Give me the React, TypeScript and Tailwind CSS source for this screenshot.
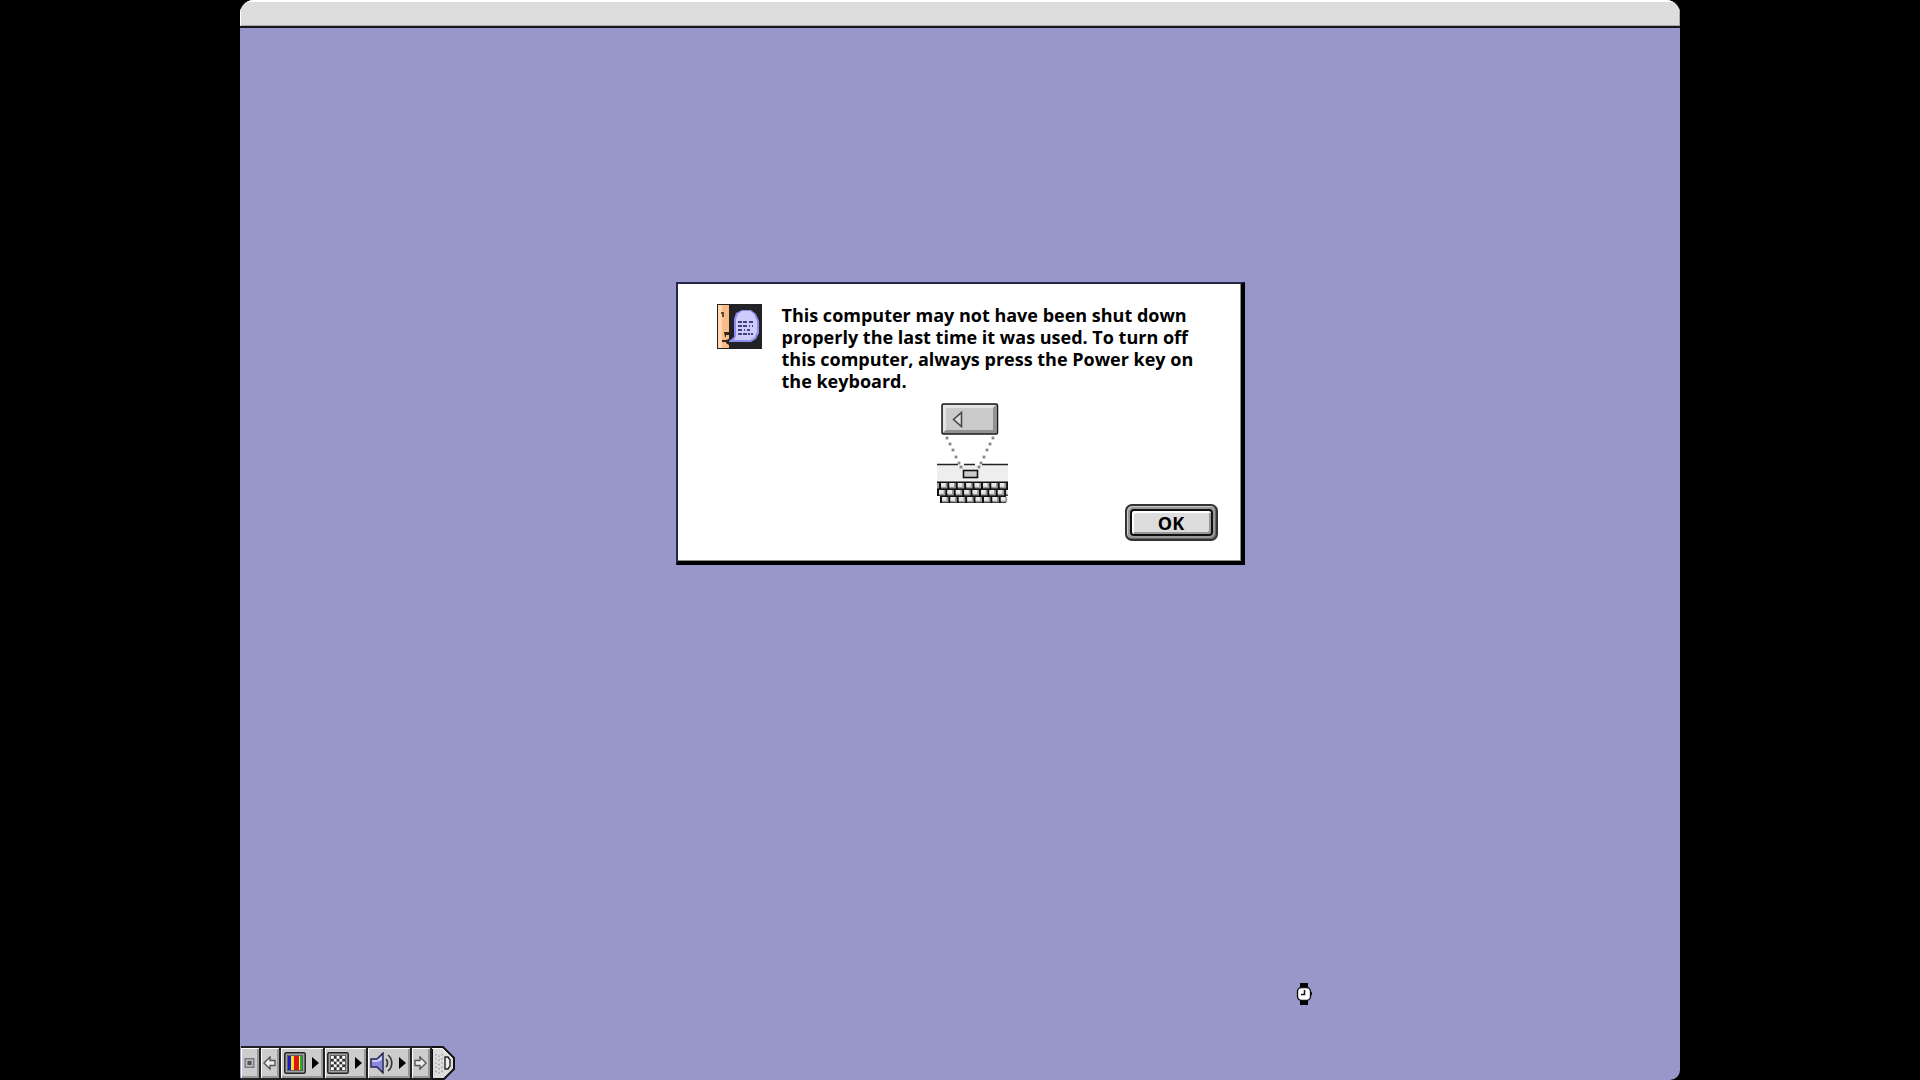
import type { ReactNode } from "react";

// x and width are in pixels of the drawing, keys repeat every 8.4
const KEY_ROWS = [
  { y: 80, x: -4.4, count: 9 },
  { y: 87, x: -6.4, count: 10 },
  { y: 94, x: 5, count: 8 },
];

const DOTS = [
  [10, 35], [13, 41], [16, 47], [19, 54], [22, 60], [24, 64],
  [56, 35], [53, 41], [50, 47], [47, 54], [44, 60], [42, 64],
];

function TalkingFace() {
  return (
    <svg width="45" height="45" viewBox="0 0 45 45" aria-hidden="true">
      <rect width="45" height="45" fill="#222226" />
      <path d="M1 1h11v27H9v3h3v4l-3 1v3l3 2v3H1z" fill="#f8bc88" />
      <path d="M1 1h4v43H1z" fill="#ffd8b0" />
      <path d="M4 8h3v5H5v-3H4z" fill="#6a4828" />
      <path d="M7 28h5v2H9v3H8zM5 36h6v2H5z" fill="#3a2414" />
      <path d="M25 6h9l5 4 3 7v12l-3 6-5 3H12v-1l5-4V15l2-6z" fill="#8e8cec" />
      <path d="M25 7h8l4 3 3 7v11l-3 6-4 2H17l2-4V15l2-5z" fill="#ccccff" />
      <path d="M21 18h4m1 0h4m2 0h4M21 22h4m1 0h4m2 0h1m2 0h1M21 26h4m2 0h1m2 0h3M21 30h4m1 0h4m1 0h2m1 0h2" stroke="#15154a" strokeWidth="1.6" />
    </svg>
  );
}

function PowerKey() {
  return (
    <svg width="71" height="100" viewBox="0 0 71 100" role="img" aria-label="Power key on keyboard">
      <rect x="5" y="1" width="55.5" height="30" rx="1.5" fill="#bbb" stroke="#161616" strokeWidth="1.5" />
      <path d="M6 29V2h53l-3 3H9v22z" fill="#e4e4e4" />
      <path d="M6 30l3-3h47V5l3-3v28z" fill="#909090" />
      <rect x="9" y="5" width="47" height="22" fill="#cacaca" />
      <path d="M24.5 9.5v14l-8-7z" fill="#ddd" stroke="#444" strokeWidth="1.5" />
      <rect y="62" width="71" height="18" fill="#eee" />
      <path d="M0 61.5h21M27 61.5h11M45 61.5h26" stroke="#222" strokeWidth="1.5" />
      {DOTS.map(([x, y]) => (
        <rect key={`${x}-${y}`} x={x - 1.4} y={y - 1.4} width="2.8" height="2.8" fill="#888" />
      ))}
      <rect x="26.5" y="67.5" width="14" height="7" fill="#ccc" stroke="#111" strokeWidth="1.6" />
      <path d="M0 78.5h71V93h-2v7H3v-7H0z" fill="#111" />
      {KEY_ROWS.map((row) =>
        Array.from({ length: row.count }, (_, i) => (
          <g key={`${row.y}-${i}`}>
            <rect x={row.x + i * 8.4} y={row.y} width="6.4" height="5.4" fill="#999" />
            <rect x={row.x + i * 8.4} y={row.y} width="4.6" height="3.8" fill="#e8e8e8" />
          </g>
        )),
      )}
    </svg>
  );
}

function Triangle() {
  return (
    <svg width="7" height="14" viewBox="0 0 7 14" aria-hidden="true">
      <path d="M0 1l7 6-7 6z" fill="#000" />
    </svg>
  );
}

function ScrollArrow({ flip = false }: { flip?: boolean }) {
  return (
    <svg width="13" height="14" viewBox="0 0 13 14" className={flip ? "rotate-180" : ""} aria-hidden="true">
      <path d="M1 7l6-6v3.5h5v5H7V13z" fill="#eee" stroke="#555" strokeWidth="1.4" />
    </svg>
  );
}

function Screen({ children }: { children: ReactNode }) {
  return (
    <svg width="22" height="22" viewBox="0 0 22 22" aria-hidden="true">
      <rect x="0.8" y="0.8" width="20.4" height="20.4" rx="1.5" fill="#aaa" stroke="#222" strokeWidth="1.5" />
      <rect x="3.4" y="3.4" width="15.2" height="15.2" fill="#ccc" stroke="#555" />
      {children}
    </svg>
  );
}

function ColorIcon() {
  return (
    <Screen>
      <rect x="4" y="4" width="3" height="14" fill="#1a1ad0" />
      <rect x="7" y="4" width="3" height="14" fill="#ffe020" />
      <rect x="10" y="4" width="5" height="14" fill="#dc1414" />
      <rect x="15" y="4" width="1" height="14" fill="#f4f060" />
      <rect x="16" y="4" width="2" height="14" fill="#18b428" />
    </Screen>
  );
}

function ResolutionIcon() {
  return (
    <Screen>
      <rect x="4" y="4" width="14" height="14" fill="#fff" />
      {Array.from({ length: 25 }, (_, i) => i)
        .filter((i) => i % 2 === 1)
        .map((i) => (
          <rect key={i} x={4 + (i % 5) * 2.8} y={4 + Math.floor(i / 5) * 2.8} width="2.8" height="2.8" fill="#333" />
        ))}
    </Screen>
  );
}

function SpeakerIcon() {
  return (
    <svg width="23" height="22" viewBox="0 0 23 22" aria-hidden="true">
      <path d="M1 7h6l6-6v20l-6-6H1z" fill="#8c88e0" stroke="#222244" strokeWidth="1.4" />
      <path d="M2 8h5l5-4v4l-5 2H2z" fill="#ccccff" />
      <path d="M16 7c2 2 2 6 0 8M18 3c5 4 5 12 0 16" fill="none" stroke="#333" strokeWidth="1.6" />
    </svg>
  );
}

function WatchCursor() {
  return (
    <svg width="16" height="24" viewBox="0 0 16 24" className="absolute right-[368px] bottom-[74px]" aria-hidden="true">
      <path d="M4 1h8v22H4z" fill="#000" />
      <rect x="1.5" y="5.5" width="13" height="13" rx="4" fill="#fff" stroke="#111" strokeWidth="1.4" />
      <path d="M8.5 8v4.5H5" fill="none" stroke="#111" strokeWidth="1.5" />
      <path d="M14 10h2v3h-2z" fill="#111" />
    </svg>
  );
}

const CELL =
  "flex items-center justify-center border-r-2 border-r-[#222] bg-[#ccc] pr-[2px] shadow-[inset_1px_1px_0_#fff,inset_-2px_-2px_0_#999]";

function ControlStrip() {
  return (
    <div className="ml-px flex h-[34px] w-fit">
      <div className="flex border-y-2 border-[#222]">
        <button type="button" aria-label="Collapse" className={`${CELL} w-5`}>
          <svg width="12" height="10" viewBox="0 0 12 10" aria-hidden="true">
            <rect x="2.2" y="0.7" width="8.6" height="8.6" fill="#bbb" stroke="#778" strokeWidth="1.4" />
            <rect x="4.5" y="3" width="4" height="4" fill="#555" />
          </svg>
        </button>
        <button type="button" aria-label="Scroll left" className={`${CELL} w-5`}>
          <ScrollArrow />
        </button>
        <button type="button" aria-label="Color depth" className={`${CELL} w-[44px] gap-[6px]`}>
          <ColorIcon />
          <Triangle />
        </button>
        <button type="button" aria-label="Resolution" className={`${CELL} w-[43px] gap-[6px]`}>
          <ResolutionIcon />
          <Triangle />
        </button>
        <button type="button" aria-label="Sound volume" className={`${CELL} w-[44px] gap-[6px]`}>
          <SpeakerIcon />
          <Triangle />
        </button>
        <button type="button" aria-label="Scroll right" className={`${CELL} w-5`}>
          <ScrollArrow flip />
        </button>
      </div>
      <button type="button" aria-label="Resize strip">
        <svg width="24" height="34" viewBox="0 0 24 34" aria-hidden="true">
          <path d="M0 1h11l11 11v11L12 33H0z" fill="#ddd" stroke="#111" strokeWidth="2" />
          <path d="M0 2.5h10l10 10" fill="none" stroke="#fff" />
          <path d="M4 8v20M7 9.4v18M10 8v20" stroke="#999" strokeWidth="1.4" strokeDasharray="1.4 2.8" />
          <path d="M13 11h3l2 3v6l-2 3h-3z" fill="#eee" stroke="#222" strokeWidth="1.4" />
        </svg>
      </button>
    </div>
  );
}

function ShutdownDialog() {
  return (
    <div
      role="alertdialog"
      aria-describedby="message"
      className="w-[569px] border-2 border-r-4 border-b-4 border-[#26264c] border-r-black border-b-black bg-white pt-[18px] pr-[23px] pb-5 pl-[39px] shadow-[inset_-1px_-1px_0_#8a928a]"
    >
      <div className="flex items-start gap-5">
        <div className="pt-[2px]">
          <TalkingFace />
        </div>
        <p id="message" className="pt-[2px] text-[18px] leading-[22px] font-bold whitespace-nowrap">
          This computer may not have been shut down
          <br />
          properly the last time it was used. To turn off
          <br />
          this computer, always press the Power key on
          <br />
          the keyboard.
        </p>
      </div>
      <div className="flex items-end justify-between pt-[11px] pl-[220px]">
        <div className="pb-[38px]">
          <PowerKey />
        </div>
        <button
          type="button"
          className="h-[37px] w-[93px] rounded-[7px] border-2 border-[#333] bg-[#999] p-[3px] shadow-[inset_1px_1px_0_#ccc,inset_-1px_-1px_0_#666]"
        >
          <span className="flex h-full items-center justify-center rounded-[4px] border-2 border-[#111] bg-[#ddd] text-[18px] leading-[22px] font-bold shadow-[inset_2px_2px_0_#fff,inset_-2px_-2px_0_#999]">
            OK
          </span>
        </button>
      </div>
    </div>
  );
}

export default function App() {
  return (
    <div className="flex min-h-screen justify-center bg-black font-['Open_Sans',sans-serif] text-black">
      <div className="relative flex w-3/4 flex-col overflow-hidden rounded-t-[14px] rounded-br-[10px] rounded-bl-[4px] bg-[#9897ca]">
        <header className="h-7 border-b-2 border-[#16161c] bg-[#ddd] shadow-[inset_1px_2px_0_#fff,inset_-1px_-1px_0_#aaa]" />
        <main className="flex grow flex-col items-center pt-[254px]">
          <ShutdownDialog />
        </main>
        <ControlStrip />
        <WatchCursor />
      </div>
    </div>
  );
}
